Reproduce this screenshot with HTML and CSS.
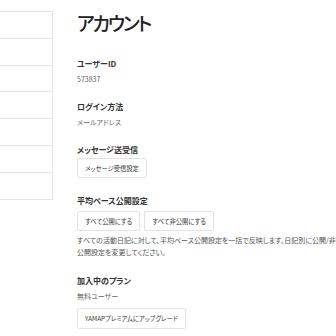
FILE: index.html
```html
<!DOCTYPE html>
<html lang="ja">
<head>
  <meta charset="UTF-8" />
  <meta name="viewport" content="width=device-width, initial-scale=1.0"/>
  <title>アカウント</title>
  <link rel="stylesheet" href="styles.css">
</head>
<body>
  <div class="layout">
    <!-- Side menu -->
    <ul class="side-menu">
      <li></li>
      <li></li>
      <li></li>
      <li></li>
      <li></li>
      <li></li>
      <li></li>
    </ul>

    <div class="content">
      <h1>アカウント</h1>

      <div class="field first">
        <div class="label">ユーザーID</div>
        <div class="value">573837</div>
      </div>

      <div class="field">
        <div class="label">ログイン方法</div>
        <div class="value">メールアドレス</div>
      </div>

      <div class="field">
        <div class="label">メッセージ送受信</div>
        <div class="actions tight">
          <button class="btn">メッセージ受信設定</button>
        </div>
      </div>

      <div class="field wide-gap">
        <div class="label">平均ペース公開設定</div>
        <div class="actions">
          <button class="btn">すべて公開にする</button>
          <button class="btn">すべて非公開にする</button>
        </div>
        <p class="note">すべての活動日記に対して、平均ペース公開設定を一括で反映します。日記別に公開/非公開を<br>公開設定を変更してください。</p>
      </div>

      <div class="field wide-gap">
        <div class="label">加入中のプラン</div>
        <div class="value">無料ユーザー</div>
        <div class="actions upgrade">
          <button class="btn btn-wide">YAMAPプレミアムにアップグレード</button>
        </div>
      </div>
    </div>
  </div>
</body>
</html>
```

FILE: styles.css
```css
html, body {
  overflow: hidden;
}

body {
  margin: 0;
  font-family: "Noto Sans CJK JP", "Noto Sans", sans-serif;
  font-feature-settings: "palt";
  color: #333;
  background: #fff;
}

.layout {
  display: flex;
  align-items: flex-start;
}

/* Side menu */
.side-menu {
  list-style: none;
  margin: 11px 0 0;
  padding: 0;
  width: 52px;
  flex-shrink: 0;
  border-top: 1px solid #e6e6e6;
  border-right: 1px solid #e6e6e6;
}

.side-menu li {
  height: 25.8px;
  border-bottom: 1px solid #e6e6e6;
}

/* Content */
.content {
  padding-left: 24px;
  width: 300px;
  flex-shrink: 0;
}

h1 {
  margin: 10px 0 0;
  font-size: 19px;
  line-height: 26px;
  font-weight: 500;
  letter-spacing: -2.2px;
  color: #222;
}

.field {
  margin-top: 16px;
}

.field.first {
  margin-top: 22px;
}

.field.wide-gap {
  margin-top: 17px;
}

.label {
  font-size: 8px;
  line-height: 12px;
  font-weight: 700;
  color: #333;
}

.value {
  margin-top: 3px;
  font-size: 7px;
  line-height: 12px;
  color: #666;
}

.actions {
  display: flex;
  gap: 4px;
  margin-top: 4px;
}

.actions.tight {
  margin-top: 2px;
}

.actions.upgrade {
  margin-top: 6px;
}

.btn {
  height: 20px;
  padding: 0 7px;
  font-family: inherit;
  font-feature-settings: "palt";
  font-size: 6.3px;
  color: #333;
  background: #fff;
  border: 1px solid #e3e3e3;
  border-radius: 2px;
  white-space: nowrap;
}

.btn-wide {
  height: 21px;
  padding: 0 7px;
}

.note {
  margin: 3px 0 0;
  font-size: 7px;
  line-height: 12px;
  color: #555;
  white-space: nowrap;
}
```
